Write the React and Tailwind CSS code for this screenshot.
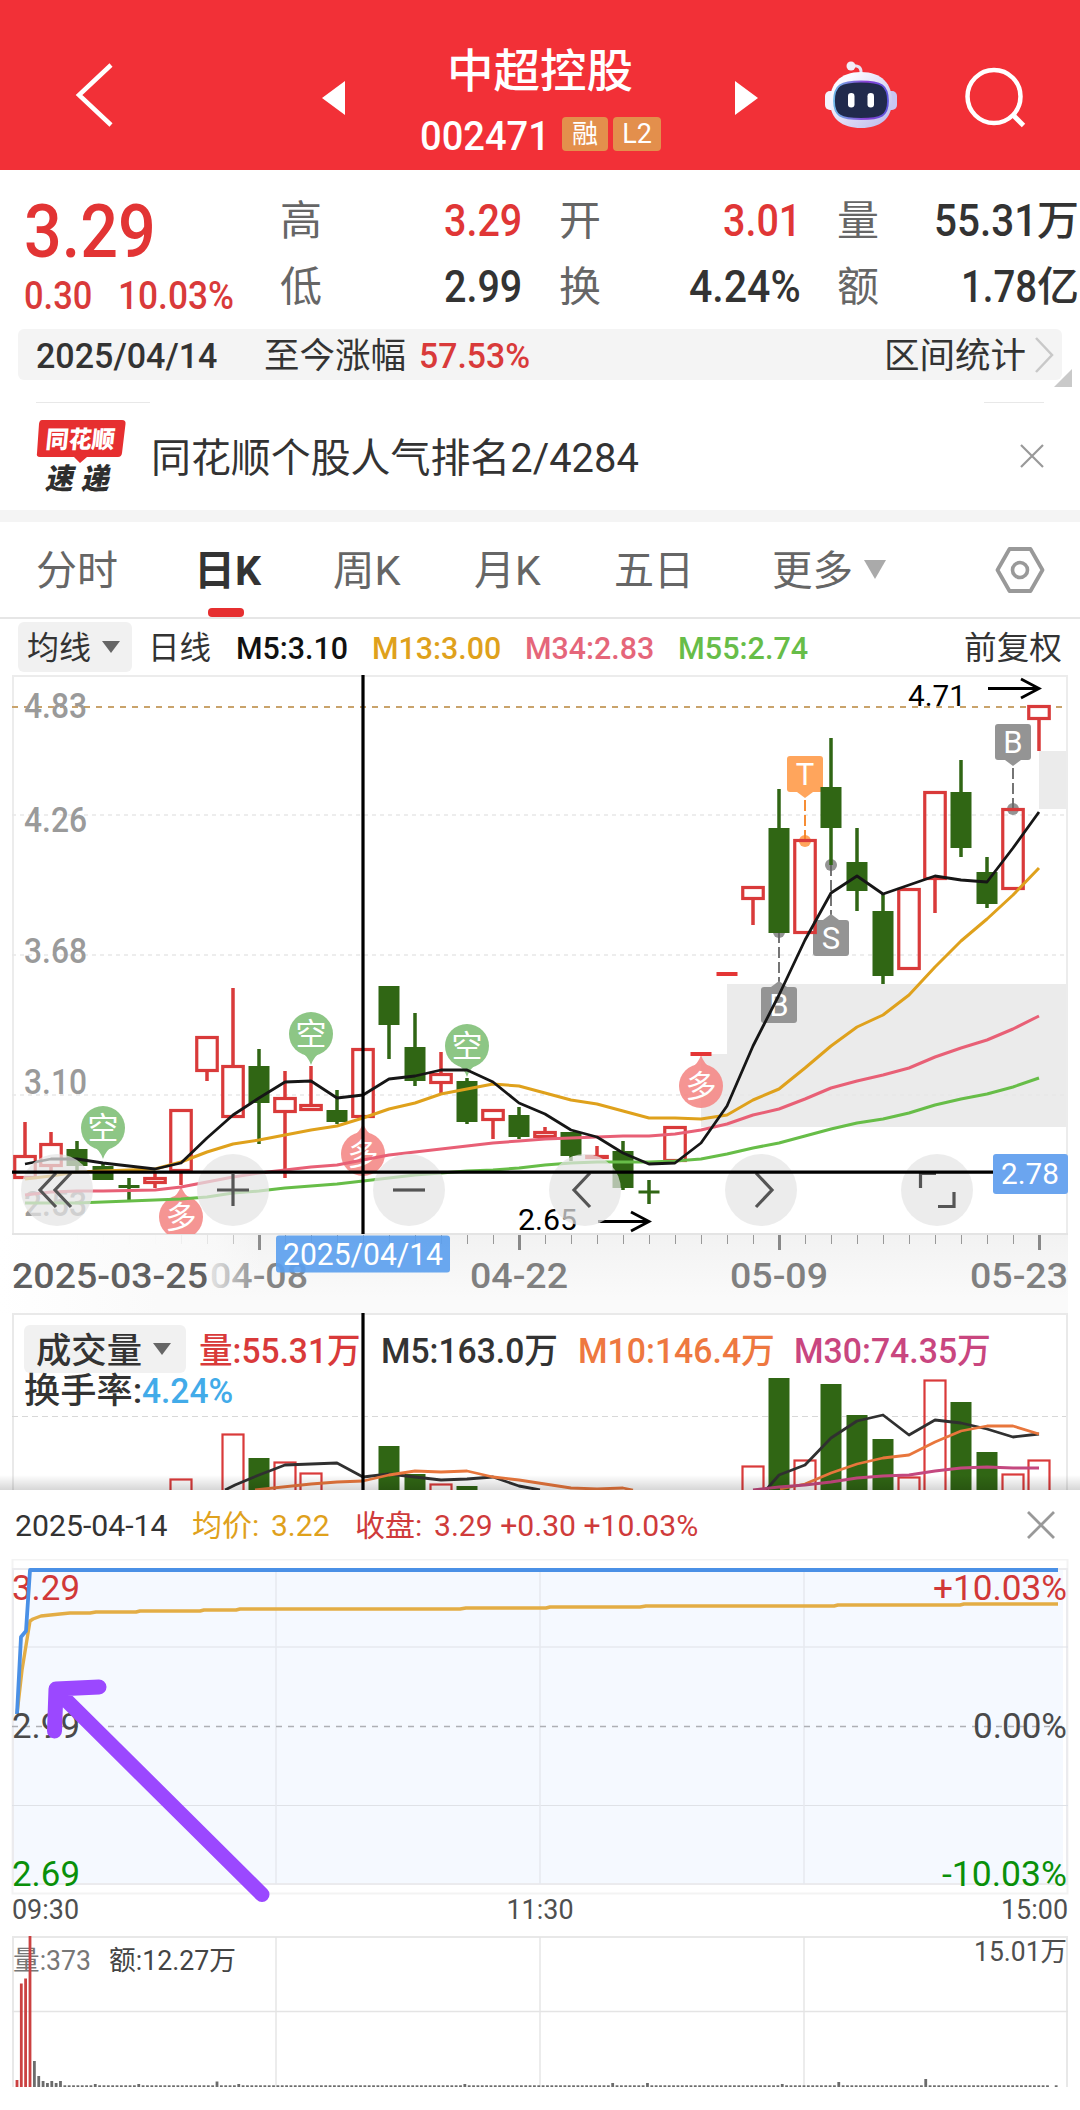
import React, { useLayoutEffect, useRef, useState } from "react";

const RED = "#d93a3a";
const GREEN = "#306614";

// Text squeezed or stretched horizontally to an exact width.
function Fit({ w, className = "", children }) {
  const ref = useRef(null);
  const [k, setK] = useState(1);
  useLayoutEffect(() => {
    const measure = () => ref.current && setK(w / ref.current.offsetWidth);
    measure();
    if (document.fonts) document.fonts.ready.then(measure);
  }, [w]);
  return (
    <span className={"inline-block shrink-0 whitespace-nowrap leading-none " + className} style={{ width: w }}>
      <span ref={ref} className="inline-block origin-left" style={{ transform: `translateY(0.045em) scaleX(${k})` }}>
        {children}
      </span>
    </span>
  );
}

function T({ x, y, w, size, fill = "#333", weight = 400, children, anchor, opacity }) {
  return (
    <text x={x} y={y} fontSize={size} fill={fill} fontWeight={weight} textAnchor={anchor} opacity={opacity}
      textLength={w} lengthAdjust={w ? "spacingAndGlyphs" : undefined}>
      {children}
    </text>
  );
}

const cx = (i) => 25 + 26 * i;
const line = (arr) => arr.map((y, i) => `${cx(i)},${y}`).join(" ");

// [colour, high, top, bottom, low]
const candles = [
  ["r", 1122, 1155, 1179, 1179], ["r", 1132, 1143, 1167, 1171], ["g", 1141, 1149, 1166, 1171], ["g", 1164, 1166, 1180, 1180],
  ["g", 1178, 1185, 1188, 1200], ["r", 1173, 1177, 1184, 1188], ["r", 1109, 1109, 1172, 1185], ["r", 1036, 1036, 1072, 1081],
  ["r", 988, 1065, 1118, 1118], ["g", 1049, 1066, 1103, 1144], ["r", 1071, 1097, 1113, 1178], ["r", 1066, 1104, 1111, 1111],
  ["g", 1090, 1110, 1122, 1124], ["r", 1048, 1048, 1118, 1118], ["g", 986, 986, 1025, 1059], ["g", 1013, 1047, 1081, 1086],
  ["r", 1052, 1073, 1084, 1093], ["g", 1078, 1081, 1122, 1124], ["r", 1109, 1109, 1121, 1139], ["g", 1107, 1115, 1137, 1139],
  ["r", 1127, 1131, 1138, 1138], ["g", 1132, 1132, 1156, 1161], ["r", 1146, 1155, 1159, 1159], ["g", 1141, 1151, 1188, 1190],
  ["g", 1180, 1190.5, 1193.5, 1204], ["r", 1126, 1126, 1162, 1162], ["d", 0, 1052, 1056, 0], ["d", 0, 972, 976, 0],
  ["r", 886, 886, 900, 925], ["g", 789, 828, 933, 933], ["r", 839, 839, 934, 934], ["g", 738, 787, 828, 865],
  ["g", 828, 862, 891, 911], ["g", 893, 911, 976, 984], ["r", 888, 888, 970, 970], ["r", 791, 791, 880, 913],
  ["g", 760, 792, 848, 857], ["g", 857, 872, 904, 908], ["r", 808, 808, 890, 890], ["r", 705, 705, 720, 751],
];
const ma5 = [1164, 1159, 1159, 1163, 1166, 1169, 1163, 1138, 1115, 1098, 1082, 1081, 1098, 1095, 1079, 1076, 1070, 1070, 1082, 1103, 1114, 1130, 1137, 1153, 1164, 1163, 1143, 1106, 1046, 995, 940, 893, 876, 894, 885, 876, 880, 882, 848, 812];
const ma13 = [1179, 1176, 1172, 1171, 1170, 1169, 1162, 1152, 1144, 1140, 1135, 1130, 1126, 1118, 1109, 1103, 1094, 1089, 1084, 1086, 1093, 1100, 1104, 1111, 1118, 1118, 1119, 1115, 1100, 1089, 1068, 1046, 1027, 1015, 995, 967, 941, 919, 895, 868];
const ma34 = [1195, 1192, 1191, 1191, 1190.5, 1190, 1187, 1182, 1177, 1173, 1170, 1167, 1165, 1160, 1155, 1152, 1149, 1146, 1143, 1141, 1139, 1138, 1137, 1136, 1136, 1134, 1130, 1124, 1115, 1109, 1099, 1088, 1081, 1075, 1068, 1057, 1048, 1040, 1029, 1016];
const ma55 = [1203, 1203, 1203, 1202, 1201, 1200, 1199, 1197, 1193, 1191, 1188, 1186, 1184, 1181, 1178, 1175, 1173, 1171, 1170, 1168, 1165, 1163, 1162, 1162, 1162, 1161, 1159, 1154, 1148, 1143, 1136, 1129, 1123, 1119, 1113, 1105, 1099, 1094, 1087, 1078];

function Candle({ i, d: [c, hi, top, bot, lo] }) {
  const x = cx(i);
  if (c === "d") return <rect x={x - 10.5} y={top} width="21" height={bot - top} fill="#e43535" />;
  if (c === "g")
    return (
      <g fill={GREEN}>
        <rect x={x - 1.75} y={hi} width="3.5" height={lo - hi} />
        <rect x={x - 10.5} y={top} width="21" height={bot - top} />
      </g>
    );
  return (
    <g>
      {hi < top && <rect x={x - 1.75} y={hi} width="3.5" height={top - hi} fill={RED} />}
      {lo > bot && <rect x={x - 1.75} y={bot} width="3.5" height={lo - bot} fill={RED} />}
      <rect x={x - 10.25} y={top + 1.5} width="20.5" height={Math.max(1, bot - top - 3)} fill="none" stroke={RED} strokeWidth="3.2" />
    </g>
  );
}

function Balloon({ x, y, up, ch }) {
  const s = up ? -1 : 1;
  return (
    <g opacity="0.9">
      <path d={`M${x - 10} ${y + s * 18} Q${x - 3} ${y + s * 22} ${x} ${y + s * 31} Q${x + 3} ${y + s * 22} ${x + 10} ${y + s * 18}Z`} fill={up ? "#f58a88" : "#81c078"} />
      <circle cx={x} cy={y} r="22" fill={up ? "#f58a88" : "#81c078"} />
      <T x={x} y={y + 11} size={31} fill="#fff" anchor="middle">{ch}</T>
    </g>
  );
}

function Flag({ x, y, up, ch, dot, color = "#949494", stroke = "#666" }) {
  return (
    <g>
      <circle cx={x} cy={dot} r="6" fill={color} />
      <path d={up ? `M${x} ${dot}V${y - 23}` : `M${x} ${dot}V${y + 23}`} stroke={stroke} strokeWidth="1.8" strokeDasharray="11 4" />
      <rect x={x - 18} y={y - 18} width="36" height="36" rx="3" fill={color} />
      <path d={up ? `M${x - 8} ${y - 18}L${x} ${y - 24}L${x + 8} ${y - 18}Z` : `M${x - 8} ${y + 18}L${x} ${y + 24}L${x + 8} ${y + 18}Z`} fill={color} />
      <T x={x} y={y + 11} size={31} fill="#fff" anchor="middle">{ch}</T>
    </g>
  );
}

const CONTROL_GLYPHS = [
  "M56 1173L40 1190L56 1207M71 1173L55 1190L71 1207",
  "M217 1190H249M233 1174V1206",
  "M393 1190H425",
  "M590 1173L574 1190L590 1207",
  "M756 1173L772 1190L756 1207",
  "M920.5 1188V1173.5H936M954 1192V1206.5H938",
];

function KChart() {
  return (
    <svg className="block h-[638px] w-[1080px]" viewBox="0 675 1080 638">
      <defs>
        <linearGradient id="axisFade" x1="0" x2="0" y1="0" y2="1">
          <stop offset="0" stopColor="#f2f2f2" />
          <stop offset="0.8" stopColor="#fafafa" />
        </linearGradient>
        <linearGradient id="leftFade" x1="0" x2="1" y1="0" y2="0">
          <stop offset="0" stopColor="#fff" />
          <stop offset="0.6" stopColor="#fafafa" stopOpacity="0.98" />
          <stop offset="0.82" stopColor="#fafafa" stopOpacity="0.75" />
          <stop offset="1" stopColor="#fafafa" stopOpacity="0" />
        </linearGradient>
        <clipPath id="plot"><rect x="12" y="675" width="1056" height="559" /></clipPath>
      </defs>
      <rect x="12" y="1234" width="1056" height="79" fill="url(#axisFade)" />
      {candles.map((_, i) => (i % 10 === 9
        ? <rect key={i} x={cx(i) - 1} y="1235" width="3" height="15" fill="#888" />
        : <rect key={i} x={cx(i)} y="1235" width="1" height="9" fill="#999" />))}
      <T x={210} y={1288} w={98} size={35} weight={500} fill="#858585">04-08</T>
      <rect x="0" y="1235" width="262" height="78" fill="url(#leftFade)" />

      <path d="M701 1054H727V984H1068V1127H701Z M1039 751H1068V809H1039Z" fill="#ebebeb" />
      <path d="M13 1234V676H1067V1234" fill="none" stroke="#ececec" strokeWidth="2" />
      <path d="M12 1234H1068" stroke="#e4e4e4" strokeWidth="2" />
      <path d="M12 815H1066M12 955H1066M12 1095H1066" stroke="#e8e8e8" strokeWidth="1.5" strokeDasharray="4 4" />
      <path d="M12 707H1066" stroke="#c9a36b" strokeWidth="2" strokeDasharray="6 6" />
      <g clipPath="url(#plot)">
        <Balloon x={181} y={1217} up ch="多" />
        <Balloon x={363} y={1154} up ch="多" />
        <Balloon x={701} y={1086} up ch="多" />
        <Balloon x={103} y={1128} ch="空" />
        <Balloon x={311} y={1034} ch="空" />
        <Balloon x={467} y={1046} ch="空" />
      </g>
      {[["4.83", 718], ["4.26", 832], ["3.68", 963], ["3.10", 1094], ["2.53", 1216]].map(([t, y]) => (
        <T key={t} x={24} y={y} w={63} size={35} weight={500} fill="#9a9a9a">{t}</T>
      ))}
      <Flag x={779} y={1005} up ch="B" dot={932} />
      <Flag x={831} y={938} up ch="S" dot={865} />
      <Flag x={805} y={774} ch="T" dot={841} color="#ffa55c" stroke="#f58220" />
      <Flag x={1013} y={742} ch="B" dot={809} />
      {candles.map((d, i) => <Candle key={i} i={i} d={d} />)}
      <g fill="none" strokeWidth="3" strokeLinejoin="round">
        <polyline points={line(ma55)} stroke="#67bd48" />
        <polyline points={line(ma34)} stroke="#e86076" />
        <polyline points={line(ma13)} stroke="#dfa11c" />
        <polyline points={line(ma5)} stroke="#161616" strokeWidth="2.8" />
      </g>
      <T x={908} y={706} w={58} size={29} fill="#000">4.71</T>
      <T x={518} y={1230} w={59} size={29} fill="#000">2.65</T>
      <path d="M988 688.5H1038M1021 679L1039 688.5L1021 698M598 1221.5H648M631 1212L649 1221.5L631 1231" fill="none" stroke="#000" strokeWidth="2.8" />
      {CONTROL_GLYPHS.map((d, i) => (
        <g key={i}>
          <circle cx={57 + 176 * i} cy="1190" r="36" fill="#e5e5e5" fillOpacity="0.72" />
          <path d={d} fill="none" stroke="#555" strokeWidth="3.2" />
        </g>
      ))}
      <path d="M12 1172.2H994M363 675V1234" stroke="#000" strokeWidth="3.2" />
      <rect x="993" y="1154" width="75" height="40" rx="3" fill="#6ba5ef" />
      <T x={1001} y={1184} w={58} size={30} fill="#fff">2.78</T>
      <T x={12} y={1288} w={196} size={35} weight={500} fill="#606060">2025-03-25</T>
      <T x={470} y={1288} w={98} size={35} weight={500} fill="#808080">04-22</T>
      <T x={730} y={1288} w={98} size={35} weight={500} fill="#808080">05-09</T>
      <T x={970} y={1288} w={98} size={35} weight={500} fill="#808080">05-23</T>
      <rect x="276" y="1235.500" width="174" height="37" rx="3" fill="#5c9fee" fillOpacity="0.92" />
      <T x={283} y={1265} w={160} size={31} fill="#fff">2025/04/14</T>
    </svg>
  );
}

const volumeBars = [
  [6, "r", 1479], [8, "r", 1434], [9, "g", 1458], [10, "r", 1462], [11, "r", 1473], [14, "g", 1446], [15, "g", 1474], [16, "r", 1484], [17, "g", 1486],
  [28, "r", 1466], [29, "g", 1378], [30, "r", 1460], [31, "g", 1384], [32, "g", 1415], [33, "g", 1439], [34, "r", 1477], [35, "r", 1380], [36, "g", 1402], [37, "g", 1452], [38, "r", 1474], [39, "r", 1460],
];

function Volume() {
  return (
    <div className="relative h-[177px]">
      <svg className="block h-[177px] w-[1080px]" viewBox="0 1313 1080 177">
        <defs>
          <linearGradient id="panelShade" x1="0" x2="0" y1="0" y2="1">
            <stop offset="0" stopColor="#000" stopOpacity="0" />
            <stop offset="1" stopColor="#000" stopOpacity="0.16" />
          </linearGradient>
        </defs>
        <path d="M13 1490V1314H1067V1490" fill="none" stroke="#e9e9e9" strokeWidth="2" />
        <path d="M12 1416.5H1066" stroke="#d8d8d8" strokeWidth="1" strokeDasharray="6 4" />
        {volumeBars.map(([i, c, y]) => (c === "g"
          ? <rect key={i} x={cx(i) - 10.5} y={y} width="21" height="130" fill={GREEN} />
          : <rect key={i} x={cx(i) - 10.5} y={y + 0.5} width="21" height="130" fill="none" stroke={RED} strokeWidth="2.2" />))}
        <g fill="none" strokeWidth="2.800" strokeLinejoin="round">
          <path d="M225 1490L235 1485L259 1475L285 1465L337 1463L363 1477L389 1474L415 1477L441 1480L467 1479L493 1477L519 1486L540 1490M766 1490L779 1475L805 1465L831 1438L857 1421L883 1415L909 1435L935 1420L961 1423L987 1429L1013 1437L1039 1434" stroke="#303030" />
          <path d="M255 1490L311 1484L337 1482L363 1481L389 1475L415 1471L441 1472L467 1471L493 1477L519 1480L545 1484L571 1488L597 1489L623 1488L633 1490M780 1489L805 1484L831 1473L857 1464L883 1458L909 1455L935 1442L961 1431L987 1426L1013 1426L1039 1434" stroke="#e8763c" />
          <path d="M753 1490L779 1487L805 1485L831 1482L857 1478L883 1476L909 1475L935 1471L961 1468L987 1467L1013 1468L1039 1468" stroke="#c4487f" />
        </g>
        <path d="M363 1313V1490" stroke="#000" strokeWidth="3.200" />
        <rect x="0" y="1475" width="1080" height="15" fill="url(#panelShade)" />
      </svg>
      <div className="absolute left-6 top-3 text-[35px] font-medium text-[#333]">
        <div className="flex h-12 items-center">
          <div className="flex h-12 w-[162px] items-center rounded-md bg-[#f1f1f1] pl-3">
            <Fit w={106}>成交量</Fit>
            <svg className="ml-[11px] h-3 w-[18px]" viewBox="0 0 18 12"><path d="M0 0H18L9 12Z" fill="#666" /></svg>
          </div>
          <Fit w={162} className="ml-[13px] text-[#d93a3a]">量:55.31万</Fit>
          <Fit w={177} className="ml-5">M5:163.0万</Fit>
          <Fit w={197} className="ml-5 text-[#ee7840]">M10:146.4万</Fit>
          <Fit w={197} className="ml-[19px] text-[#c9467f]">M30:74.35万</Fit>
        </div>
        <div className="-mt-1 flex h-10 items-center">
          <Fit w={118}>换手率:</Fit>
          <Fit w={91} className="text-[#42abe9]">4.24%</Fit>
        </div>
      </div>
    </div>
  );
}

const tickBars = (() => {
  const tall = { 4: 2061, 5: 2076, 6: 2081, 7: 2083, 8: 2081, 9: 2083, 10: 2081, 18: 2084, 28: 2084, 46: 2081.500, 51: 2084, 103: 2084, 137: 2083, 145: 2083, 176: 2084, 189: 2082, 209: 2079 };
  const out = [];
  for (let i = 4; i < 240; i++) if (i !== 238) out.push([17 + i * 4.348, tall[i] || 2085.300]);
  return out;
})();

function DayPanel() {
  return (
    <section className="h-[620px] bg-white">
      <div className="flex h-[69px] items-center pl-[15px] pr-[25px] text-[30px]">
        <Fit w={152} className="text-[#333]">2025-04-14</Fit>
        <Fit w={67} className="ml-[25px] text-[#dfa11c]">均价:</Fit>
        <Fit w={59} className="ml-3 text-[#dfa11c]">3.22</Fit>
        <Fit w={67} className="ml-[25px] text-[#cf3b3b]">收盘:</Fit>
        <Fit w={264} className="ml-3 text-[#cf3b3b]">3.29 +0.30 +10.03%</Fit>
        <svg className="ml-auto h-7 w-7" viewBox="0 0 28 28"><path d="M1 1L27 27M27 1L1 27" stroke="#999" strokeWidth="2.800" /></svg>
      </div>
      <svg className="block h-[551px] w-[1080px]" viewBox="0 1559 1080 551">
        <rect x="12.500" y="1559.500" width="1055" height="334" fill="none" stroke="#f3f3f3" strokeWidth="2" />
        <path d="M17 1714L21 1637L26 1631L30 1570H1063V1884H13V1714Z" fill="#f5f9ff" />
        <path d="M13 1884V1569H1067V1884Z" fill="none" stroke="#ebebee" strokeWidth="2" />
        <path d="M12 1647H1068M12 1805.500H1068" stroke="#dfe2e7" strokeWidth="1.2" />
        <path d="M276 1570V1884M540 1570V1884M804 1570V1884" stroke="#e6e9ef" strokeWidth="1.500" />
        <path d="M12 1726.500H1066" stroke="#aeb0b5" strokeWidth="1.600" strokeDasharray="6 6" />
        <path d="M17 1714L22 1670L30 1621L33 1619L41 1616L60 1614L70 1613H90L96 1612H136L140 1611H200L204 1610H236L240 1609H460L466 1608H546L550 1607H640L646 1606H834L838 1605H960L964 1604H1058" fill="none" stroke="#e3ad45" strokeWidth="3.400" strokeLinejoin="round" />
        <T x={12} y={1600} w={68} size={35} fill="#d13838">3.29</T>
        <path d="M17 1714L21 1637L26 1631L30 1570H1058" fill="none" stroke="#4a90e6" strokeWidth="3.800" strokeLinejoin="round" />
        <T x={12} y={1738} w={68} size={35} fill="#4a4a4a">2.99</T>
        <T x={12} y={1886} w={68} size={35} fill="#0a900a">2.69</T>
        <T x={1067} y={1600} w={134} size={35} fill="#d13838" anchor="end">+10.03%</T>
        <T x={1067} y={1738} w={94} size={35} fill="#4a4a4a" anchor="end">0.00%</T>
        <T x={1067} y={1886} w={125} size={35} fill="#0a900a" anchor="end">-10.03%</T>
        <T x={12} y={1919} w={67} size={27.500} fill="#4f4f4f">09:30</T>
        <T x={540} y={1919} w={67} size={27.500} fill="#4f4f4f" anchor="middle">11:30</T>
        <T x={1068} y={1919} w={67} size={27.500} fill="#4f4f4f" anchor="end">15:00</T>

        <path d="M13 2087V1937H1067V2087" fill="none" stroke="#e8e8e8" strokeWidth="2" />
        <path d="M276 1937V2087M540 1937V2087M804 1937V2087M12 2011.500H1068" stroke="#e4e4e4" strokeWidth="1.400" />
        <T x={13} y={1970} w={78} size={27} fill="#777">量:373</T>
        <T x={109} y={1970} w={127} size={27} fill="#444">额:12.27万</T>
        <T x={1067} y={1961} w={93} size={27} fill="#4f4f4f" anchor="end">15.01万</T>
        <path d="M17 2080V2087M21.300 1983.500V2087M25.600 1978.500V2087M30 1936V2087" stroke="#cb4141" strokeWidth="2.800" />
        {tickBars.map(([x, y], i) => <rect key={i} x={x - 1.400} y={y} width="2.800" height={2087 - y} fill="#6c6c6c" />)}
        <path d="M262 1894.500L57 1691M99 1687L56 1689L54.500 1731" fill="none" stroke="#9b48ff" strokeWidth="15" strokeLinecap="round" strokeLinejoin="round" />
      </svg>
    </section>
  );
}

function Robot() {
  return (
    <svg className="h-[68px] w-[76px]" viewBox="823 60 76 68">
      <defs>
        <linearGradient id="head" x1="0" x2="1" y1="0" y2="1"><stop offset="0.2" stopColor="#fbfaff" /><stop offset="1" stopColor="#b9b6ea" /></linearGradient>
        <linearGradient id="rim" x1="0" x2="1" y1="0" y2="0"><stop offset="0" stopColor="#6fb7e8" /><stop offset="0.600" stopColor="#8a3fd6" /><stop offset="1" stopColor="#5b55dd" /></linearGradient>
      </defs>
      <path d="M851 66Q862 64 861 74" fill="none" stroke="#e9e3f2" strokeWidth="3" />
      <circle cx="851" cy="66" r="4.500" fill="#f3eef8" />
      <rect x="825" y="91" width="12" height="19" rx="5" fill="#f4f2fc" />
      <rect x="885" y="91" width="12" height="19" rx="5" fill="#c9c6f2" />
      <path d="M861 72C882 72 892 84 892 101C892 119 880 128 861 128C842 128 830 119 830 101C830 84 840 72 861 72Z" fill="url(#head)" />
      <path d="M861 81.500C881 81.500 888 85 888 101C888 116 881 119 861 119C841 119 834 116 834 101C834 85 841 81.500 861 81.500Z" fill="#212a4c" stroke="url(#rim)" strokeWidth="1.800" />
      <rect x="848" y="93" width="6.500" height="14.500" rx="3.200" fill="#fff" />
      <rect x="867.500" y="93" width="6.500" height="14.500" rx="3.200" fill="#fff" />
    </svg>
  );
}

function Header() {
  return (
    <header className="flex h-[170px] bg-[#f23037] text-white">
      <svg className="ml-[74px] mt-[61px] h-[68px] w-10" viewBox="0 0 40 68"><path d="M37 4L5 34L37 64" fill="none" stroke="#fff" strokeWidth="4.500" /></svg>
      <svg className="ml-[208px] mt-[81px] h-[34px] w-[23px]" viewBox="0 0 23 34"><path d="M23 0V34L0 17Z" fill="#fff" /></svg>
      <div className="ml-[76px] w-[240px]">
        <div className="ml-[26px] mt-[46px] h-[46px] text-[46px] font-medium"><Fit w={186}>中超控股</Fit></div>
        <div className="mt-6 flex h-9 items-center">
          <Fit w={130} className="-ml-px text-[41px] font-medium">002471</Fit>
          <span className="ml-3 flex h-[34px] w-[46px] items-center justify-center rounded bg-[#e38f4c] text-[26px] leading-none">融</span>
          <span className="ml-[5px] flex h-[34px] w-12 items-center justify-center rounded bg-[#e38f4c] text-[27px] leading-none">L2</span>
        </div>
      </div>
      <svg className="ml-[74px] mt-[81px] h-[34px] w-[23px]" viewBox="0 0 23 34"><path d="M0 0V34L23 17Z" fill="#fff" /></svg>
      <div className="ml-[65px] mt-[60px]"><Robot /></div>
      <svg className="ml-[65px] mt-[65px] h-16 w-16" viewBox="964 65 64 64"><circle cx="994" cy="96.500" r="26.500" fill="none" stroke="#fff" strokeWidth="4.500" /><path d="M1013 115L1023.500 125.500" stroke="#fff" strokeWidth="4.800" /></svg>
    </header>
  );
}

function Cell({ label, w, value, unit, red }) {
  return (
    <div className="flex h-[66px] items-center text-[41px]">
      <Fit w={42} className="text-[#666]">{label}</Fit>
      <span className={"ml-auto flex items-center font-medium " + (red ? "text-[#e03636]" : "text-[#333]")}>
        <Fit w={w} className="text-[44px]">{value}</Fit>
        {unit && <Fit w={42}>{unit}</Fit>}
      </span>
    </div>
  );
}

function Quote() {
  return (
    <section className="flex h-[159px]">
      <div className="ml-6 w-[256px] text-[#e23434]">
        <div className="mt-[22px] h-[74px] text-[74px] font-medium"><Fit w={132}>3.29</Fit></div>
        <div className="mt-[9px] flex text-[38px] font-medium text-[#d93a3a]">
          <Fit w={68}>0.30</Fit>
          <Fit w={116} className="ml-[26px]">10.03%</Fit>
        </div>
      </div>
      <div className="mt-4 w-[242px]">
        <Cell label="高" w={78} value="3.29" red />
        <Cell label="低" w={78} value="2.99" />
      </div>
      <div className="ml-[37px] mt-4 w-[242px]">
        <Cell label="开" w={78} value="3.01" red />
        <Cell label="换" w={112} value="4.24%" />
      </div>
      <div className="ml-9 mt-4 w-[242px]">
        <Cell label="量" w={103} value="55.31" unit="万" />
        <Cell label="额" w={76} value="1.78" unit="亿" />
      </div>
    </section>
  );
}

export default function App() {
  return (
    <main className="h-[2110px] w-[1080px] overflow-hidden bg-white font-[Roboto,'Noto_Sans_CJK_SC',sans-serif] leading-none text-[#333]">
      <Header />
      <Quote />
      <div className="relative mx-[18px] flex h-[51px] items-center rounded-md bg-[#f4f4f4] pl-[18px] pr-2 text-[35px]">
        <Fit w={181} className="font-medium">2025/04/14</Fit>
        <Fit w={142} className="ml-[47px]">至今涨幅</Fit>
        <Fit w={111} className="ml-[13px] font-medium text-[#d93a3a]">57.53%</Fit>
        <Fit w={142} className="ml-auto">区间统计</Fit>
        <svg className="ml-2 h-[38px] w-5" viewBox="0 0 20 38"><path d="M2 2L18 19L2 36" fill="none" stroke="#c8c8c8" strokeWidth="2.500" /></svg>
        <svg className="absolute -bottom-[7px] -right-[10px] h-[18px] w-[18px]" viewBox="0 0 18 18"><path d="M18 0V18H0Z" fill="#c9c9c9" /></svg>
      </div>
      <section className="h-[130px] pt-[22px]">
        <div className="flex justify-between pl-9 pr-9">
          <div className="h-px w-[114px] bg-[#e8e8e8]" />
          <div className="h-px w-[60px] bg-[#e8e8e8]" />
        </div>
        <div className="flex pl-9 pr-9">
          <div className="relative mt-[17px] h-[74px] w-[90px]">
            <svg className="block h-[44px] w-[90px]" viewBox="0 0 90 44"><path d="M6 0H86Q90 0 89.500 4L86 33Q85.500 37 82 37H51L44 43L38 37H4Q0 37 1 33L3 4Q3.500 0 6 0Z" fill="#e62f30" /></svg>
            <div className="absolute left-[10px] top-[7px] -skew-x-6 text-[24px] font-black text-white"><Fit w={69}>同花顺</Fit></div>
            <div className="ml-[11px] flex -skew-x-12 gap-2 text-[29px] font-black text-[#2e2e2e]"><Fit w={28}>速</Fit><Fit w={28}>递</Fit></div>
          </div>
          <Fit w={488} className="ml-[25px] mt-[34px] text-[40px]">同花顺个股人气排名2/4284</Fit>
          <svg className="ml-auto mt-[41px] h-6 w-6" viewBox="0 0 24 24"><path d="M1 1L23 23M23 1L1 23" stroke="#999" strokeWidth="2.200" /></svg>
        </div>
      </section>
      <div className="h-3 bg-[#f4f4f4]" />
      <nav className="flex h-[97px] items-center border-b-2 border-[#e6e6e6] pl-9 text-[41px] text-[#666]">
        <Fit w={82}>分时</Fit>
        <div className="relative ml-[76px] flex h-full w-[66px] items-center">
          <Fit w={67} className="font-bold text-[#333]">日K</Fit>
          <div className="absolute bottom-0 left-[14px] h-[9px] w-9 rounded-[4px] bg-[#e62f30]" />
        </div>
        <Fit w={68} className="ml-[73px]">周K</Fit>
        <Fit w={67} className="ml-[73px]">月K</Fit>
        <Fit w={80} className="ml-[73px]">五日</Fit>
        <Fit w={81} className="ml-[78px]">更多</Fit>
        <svg className="ml-[11px] h-[19px] w-[22px]" viewBox="0 0 22 19"><path d="M0 0H22L11 19Z" fill="#aaa" /></svg>
        <svg className="ml-[109px] h-[48px] w-[50px]" viewBox="0 0 50 48"><path d="M14.500 3H35.500L47.500 24L35.500 45H14.500L2.500 24Z" fill="none" stroke="#999" strokeWidth="3.800" strokeLinejoin="round" /><circle cx="25" cy="24" r="7.500" fill="none" stroke="#999" strokeWidth="3.600" /></svg>
      </nav>
      <div className="flex h-14 items-center pl-[18px] text-[32px]">
        <div className="flex h-[50px] w-[114px] items-center rounded-md bg-[#f1f1f1] pl-[9px]">
          <Fit w={64}>均线</Fit>
          <svg className="ml-[11px] h-3 w-[18px]" viewBox="0 0 18 12"><path d="M0 0H18L9 12Z" fill="#666" /></svg>
        </div>
        <Fit w={63} className="ml-4">日线</Fit>
        <Fit w={112} className="ml-[25px] font-medium text-[#111]">M5:3.10</Fit>
        <Fit w={129} className="ml-6 font-medium text-[#dfa11c]">M13:3.00</Fit>
        <Fit w={129} className="ml-6 font-medium text-[#e5667a]">M34:2.83</Fit>
        <Fit w={130} className="ml-6 font-medium text-[#67bd48]">M55:2.74</Fit>
        <Fit w={98} className="ml-auto mr-[18px]">前复权</Fit>
      </div>
      <KChart />
      <Volume />
      <DayPanel />
    </main>
  );
}
